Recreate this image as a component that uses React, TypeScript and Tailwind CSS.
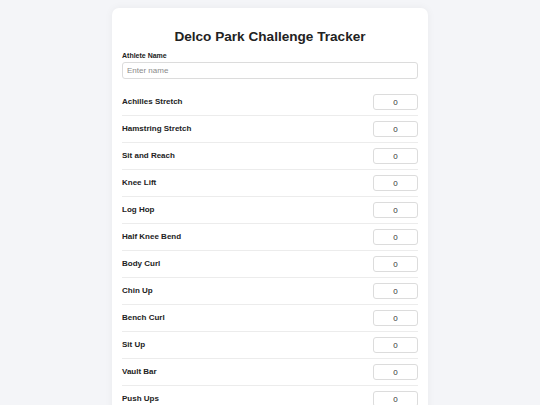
import React from "react";

const events = [
  "Achilles Stretch",
  "Hamstring Stretch",
  "Sit and Reach",
  "Knee Lift",
  "Log Hop",
  "Half Knee Bend",
  "Body Curl",
  "Chin Up",
  "Bench Curl",
  "Sit Up",
  "Vault Bar",
  "Push Ups",
  "Balance Beam",
  "Leg Raise",
  "Step Up",
];

export default function App() {
  return (
    <div
      className="min-h-screen bg-[#f4f5f8] pt-[8px] pb-[20px]"
      style={{ fontFamily: '"Liberation Sans", Arial, sans-serif' }}
    >
      <div className="mx-auto w-[316px] rounded-[7px] bg-white px-[10px] pt-[21px] pb-[14px] shadow-[0_0_8px_rgba(0,0,0,0.05)]">
        <h1 className="text-center text-[13.6px] leading-[16px] font-bold text-[#222]">
          Delco Park Challenge Tracker
        </h1>
        <label className="mt-[5.6px] block text-[7px] leading-[9px] font-bold text-[#222]">
          Athlete Name
        </label>
        <input
          type="text"
          placeholder="Enter name"
          className="mt-[2.6px] block h-[17px] w-full rounded-[3px] border border-[#dcdcdc] px-[4px] text-[8px] text-[#333] outline-none placeholder:text-[#8a8a8a]"
        />
        <div className="mt-[10px]">
          {events.map((e) => (
            <div
              key={e}
              className="flex items-center justify-between border-b border-[#ececec] py-[5px]"
            >
              <span className="text-[8px] leading-[16px] font-bold text-[#222]">{e}</span>
              <input
                type="text"
                defaultValue="0"
                className="h-[16px] w-[45px] rounded-[3px] border border-[#dcdcdc] text-center text-[8px] text-[#333] outline-none"
              />
            </div>
          ))}
        </div>
      </div>
    </div>
  );
}
